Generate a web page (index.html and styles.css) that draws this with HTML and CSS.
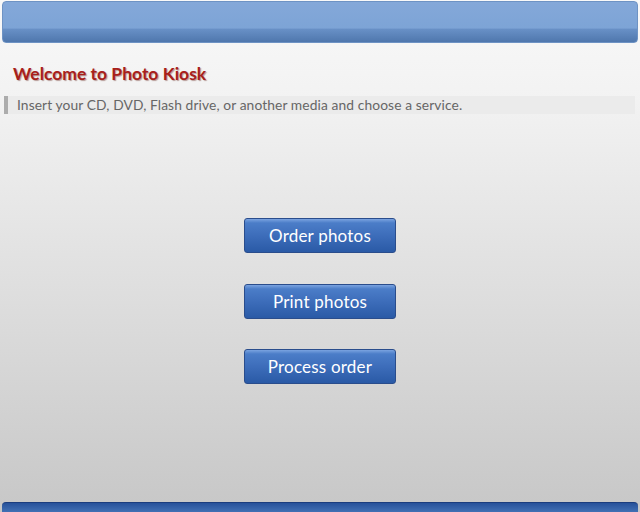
FILE: index.html
```html
<!DOCTYPE html>
<html lang="en">
<head>
    <meta charset="UTF-8">
    <title>Photo Kiosk</title>
    <link rel="stylesheet" href="styles.css">
</head>
<body>
    <div class="topbar"></div>
    <h1 class="title">Welcome to Photo Kiosk</h1>
    <div class="hint">Insert your CD, DVD, Flash drive, or another media and choose a service.</div>
    <div class="menu">
        <button class="btn">Order photos</button>
        <button class="btn">Print photos</button>
        <button class="btn">Process order</button>
    </div>
    <div class="bottombar"></div>
</body>
</html>
```
FILE: styles.css
```css
* {
    margin: 0;
    padding: 0;
    box-sizing: border-box;
    font-family: 'Lato', 'Open Sans', sans-serif;
}
html, body {
    height: 100%;
}
body {
    background: linear-gradient(180deg, #f9f9f9 0%, #f2f2f2 20%, #c7c7c7 100%);
    display: flex;
    flex-direction: column;
    padding: 1px 2px 0 2px;
    overflow: hidden;
}
.topbar {
    height: 42px;
    border-radius: 4px;
    border: 1px solid #6e93c4;
    background: linear-gradient(180deg, #84a8d9 0%, #7da4d6 65%, #6890c6 68%, #4f77ad 100%);
    flex-shrink: 0;
}
.title {
    margin: 20px 0 0 11px;
    font-size: 17.5px;
    font-weight: bold;
    color: #a8201a;
    text-shadow: 1px 1px 1px rgba(90, 20, 10, 0.4);
    line-height: 22px;
}
.hint {
    margin: 11px 3px 0 2px;
    height: 18px;
    background: #ebebeb;
    border-left: 4px solid #acacac;
    padding-left: 9px;
    font-size: 13.8px;
    letter-spacing: 0.1px;
    line-height: 18px;
    color: #666;
}
.menu {
    display: flex;
    flex-direction: column;
    align-items: center;
    gap: 30.5px;
    margin-top: 104px;
    flex: 1;
}
.btn {
    width: 152px;
    height: 35px;
    border: 1px solid #2a4d8c;
    border-radius: 3px;
    background: linear-gradient(180deg, #7aa3e0 0%, #4b7dc8 12%, #3d6dba 50%, #2a5aa6 100%);
    color: #fff;
    font-size: 17px;
    letter-spacing: 0.2px;
    cursor: pointer;
}
.bottombar {
    height: 10px;
    border-radius: 4px 4px 0 0;
    border-top: 1px solid #1b3d7e;
    background: linear-gradient(180deg, #27519a 0%, #4270b4 100%);
    flex-shrink: 0;
}
```
